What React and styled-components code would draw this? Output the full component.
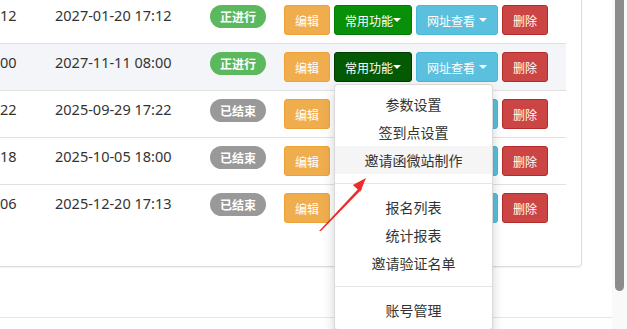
import React from 'react'
import styled, { createGlobalStyle, css } from 'styled-components'

const GlobalStyle = createGlobalStyle`
  html, body {
    margin: 0;
    padding: 0;
    overflow: hidden;
    background: #fff;
    font-family: "Noto Sans", "Noto Sans CJK SC", sans-serif;
    color: #333;
  }
`

const Frame = styled.div`
  display: flex;
  width: 627px;
  height: 329px;
`

const Main = styled.div`
  flex: 1;
  position: relative;
  overflow: hidden;
`

const ScrollTrack = styled.div`
  width: 15px;
  padding-left: 3px;
  box-sizing: border-box;
  background: #f9f9f9;
`

const ScrollThumb = styled.div`
  width: 9px;
  height: 291px;
  background: #8c8c8c;
  border-radius: 0 0 5px 5px;
`

const Card = styled.div`
  margin: -5px 30px 0 -124px;
  padding: 0 15px 35px;
  border: 1px solid #dcdcdc;
  border-radius: 4px;
  box-shadow: 0 1px 2px rgba(0, 0, 0, 0.06);
  background: #fff;
`

const Row = styled.div`
  display: grid;
  grid-template-columns: 155px 155px 74px 1fr;
  align-items: start;
  border-top: 1px solid #e1e1e1;
  background: ${p => (p.$hover ? '#f4f5f9' : 'transparent')};
  &:first-child {
    border-top-color: transparent;
  }
`

const Cell = styled.div`
  padding: 8px;
  font-size: 14.5px;
  line-height: 20px;
  white-space: nowrap;
`

const Actions = styled(Cell)`
  display: flex;
  gap: 4px;
`

const Badge = styled.span`
  display: inline-block;
  height: 23px;
  line-height: 23px;
  padding: 0 10px;
  border-radius: 12px;
  font-family: "Noto Sans CJK SC", sans-serif;
  font-size: 12px;
  font-weight: 700;
  color: #fff;
  background: ${p => (p.$active ? '#5cb85c' : '#999')};
`

const tones = {
  warning: css`background: #f0ad4e; border-color: #eea236;`,
  success: css`background: #089108; border-color: #067806;`,
  pressed: css`background: #045a04; border-color: #023a02;`,
  info: css`background: #5bc0de; border-color: #46b8da;`,
  danger: css`background: #cb4545; border-color: #b52a2a;`,
}

const Button = styled.button`
  display: inline-flex;
  align-items: center;
  height: 30px;
  padding: 0 10px;
  border: 1px solid;
  border-radius: 3px;
  font-family: "Noto Sans CJK SC", sans-serif;
  font-size: 12px;
  color: #fff;
  cursor: pointer;
  ${p => tones[p.$tone]}
`

const Caret = styled.span`
  display: inline-block;
  width: 0;
  height: 0;
  margin-left: ${p => (p.$spaced ? '4px' : '0')};
  border-top: 4px solid #fff;
  border-left: 4px solid transparent;
  border-right: 4px solid transparent;
`

const Group = styled.div`
  position: relative;
`

const Menu = styled.ul`
  position: absolute;
  top: 100%;
  left: 0;
  z-index: 10;
  width: 159px;
  box-sizing: border-box;
  margin: 2px 0 0;
  padding: 5px 0;
  list-style: none;
  background: #fff;
  border: 1px solid rgba(0, 0, 0, 0.15);
  border-radius: 4px;
  box-shadow: 0 6px 12px rgba(0, 0, 0, 0.175);
`

const MenuItem = styled.li`
  padding: 4px 20px;
  line-height: 20px;
  text-align: center;
  font-family: "Noto Sans CJK SC", sans-serif;
  font-size: 14px;
  color: #333;
  background: ${p => (p.$focus ? '#f5f5f5' : 'transparent')};
`

const Divider = styled.li`
  height: 1px;
  margin: 9px 0;
  background: #e5e5e5;
`

const Footer = styled.div`
  margin: 50px 0 0;
  height: 20px;
  border-top: 1px solid #e5e5e5;
`

const Pointer = styled.svg`
  position: absolute;
  left: 310px;
  top: 170px;
  z-index: 20;
`

const rows = [
  { start: '2027-01-10 17:12', end: '2027-01-20 17:12', active: true },
  { start: '2027-11-09 08:00', end: '2027-11-11 08:00', active: true, open: true },
  { start: '2025-09-27 17:22', end: '2025-09-29 17:22' },
  { start: '2025-10-03 09:18', end: '2025-10-05 18:00' },
  { start: '2025-12-18 17:06', end: '2025-12-20 17:13' },
]

const menu = [
  ['参数设置', '签到点设置', '邀请函微站制作'],
  ['报名列表', '统计报表', '邀请验证名单'],
  ['账号管理'],
]

const FuncMenu = () => (
  <Menu>
    {menu.map((group, gi) => (
      <React.Fragment key={gi}>
        {gi > 0 && <Divider />}
        {group.map(label => (
          <MenuItem key={label} $focus={label === '邀请函微站制作'}>{label}</MenuItem>
        ))}
      </React.Fragment>
    ))}
  </Menu>
)

export default function App() {
  return (
    <Frame>
      <GlobalStyle />
      <Main>
        <Card>
          {rows.map((r, i) => (
            <Row key={i} $hover={r.open}>
              <Cell>{r.start}</Cell>
              <Cell>{r.end}</Cell>
              <Cell>
                <Badge $active={r.active}>{r.active ? '正进行' : '已结束'}</Badge>
              </Cell>
              <Actions>
                <Button $tone="warning">编辑</Button>
                <Group>
                  <Button $tone={r.open ? 'pressed' : 'success'}>常用功能<Caret /></Button>
                  {r.open && <FuncMenu />}
                </Group>
                <Button $tone="info">网址查看<Caret $spaced /></Button>
                <Button $tone="danger">删除</Button>
              </Actions>
            </Row>
          ))}
        </Card>
        <Footer />
        <Pointer width="70" height="70" viewBox="0 0 70 70">
          <polygon points="9,61 10.5,59.5 50,17 52,19 11,61" fill="#ee2b2b" />
          <polygon points="56,8 50.3,21.7 42.9,15.1" fill="#ee2b2b" />
        </Pointer>
      </Main>
      <ScrollTrack>
        <ScrollThumb />
      </ScrollTrack>
    </Frame>
  )
}
